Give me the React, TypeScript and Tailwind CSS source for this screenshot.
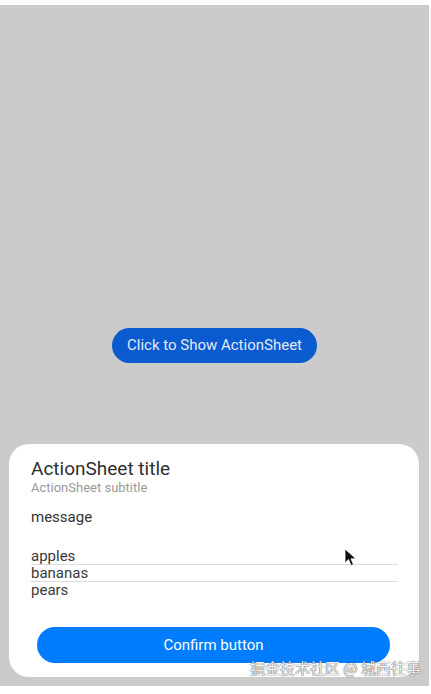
import React from "react";

export default function App() {
  const font = { fontFamily: "Roboto, 'Noto Sans', sans-serif" };
  return (
    <div className="relative w-[431px] h-[694px] bg-white overflow-hidden" style={font}>
      <div className="mt-[5px] w-[429px] h-[681px] bg-[#cbcbcb] flex flex-col items-center">
        <button className="mt-[323px] h-[35px] w-[205px] rounded-full bg-[#0a5ad0] text-[#e3e9f3] text-[15px] flex items-center justify-center">
          Click to Show ActionSheet
        </button>
        <div className="mt-[81px] self-start ml-[9px] w-[410px] h-[233px] rounded-[20px] bg-white flex flex-col px-[22px] pt-[13px]">
          <div className="text-[19px] leading-[24px] text-[#2f2f2f]">ActionSheet title</div>
          <div className="text-[13px] leading-[14px] text-[#9a9a9a]">ActionSheet subtitle</div>
          <div className="mt-[13px] text-[15px] leading-[18px] text-[#333]">message</div>
          <div className="mt-[22px] w-[367px] flex flex-col text-[15px] leading-[16px] text-[#3a3a3a]">
            <div className="border-b border-[#dcdcdc]">apples</div>
            <div className="border-b border-[#dcdcdc]">bananas</div>
            <div>pears</div>
          </div>
          <button className="mt-[29px] ml-[6px] w-[353px] h-[36px] rounded-full bg-[#007dff] text-white text-[15px] flex items-center justify-center">
            Confirm button
          </button>
        </div>
      </div>
      <svg className="absolute left-[344px] top-[548px]" width="14" height="20" viewBox="0 0 14 20">
        <path d="M1 1 L1 15 L4.5 11.5 L7 17.5 L9.5 16.5 L7 10.8 L12 10.8 Z" fill="#111" stroke="#fff" strokeWidth="0.8" />
      </svg>
      <div
        className="absolute left-[250px] top-[658px] whitespace-nowrap text-[15px] leading-[20px] text-[#f2f2f2]"
        style={{ fontFamily: "'Noto Sans CJK SC', sans-serif", textShadow: "0 0 1px #555, 0 0 1px #555" }}
      >
        掘金技术社区 @ 城西往事
      </div>
    </div>
  );
}
